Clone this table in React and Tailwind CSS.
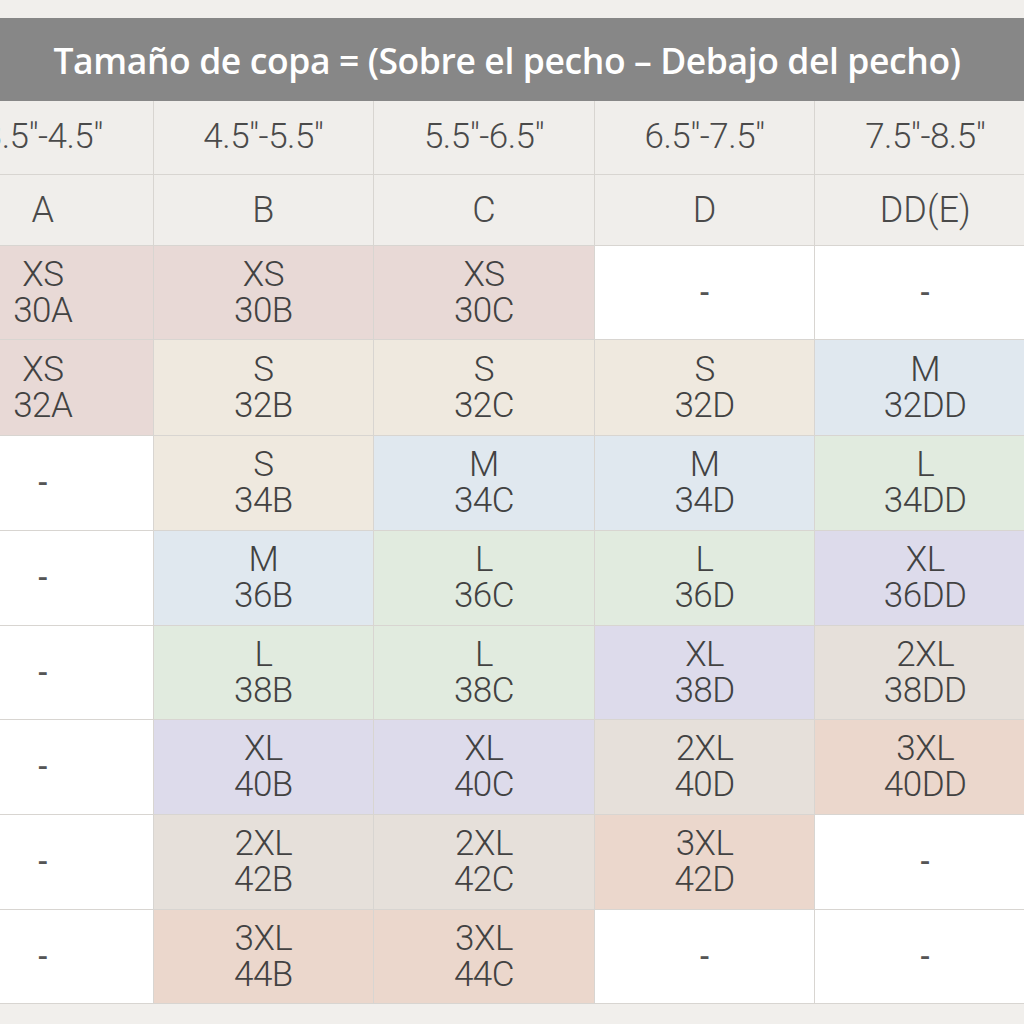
import React from 'react';

const ranges = ['3.5″-4.5″', '4.5″-5.5″', '5.5″-6.5″', '6.5″-7.5″', '7.5″-8.5″'];
const cups = ['A', 'B', 'C', 'D', 'DD(E)'];

// fondo de cada talla
const sizeBg = {
  XS: 'bg-[#e8d9d6]',
  S: 'bg-[#efe9df]',
  M: 'bg-[#e0e8ef]',
  L: 'bg-[#e1ebdf]',
  XL: 'bg-[#dddbeb]',
  '2XL': 'bg-[#e6e0da]',
  '3XL': 'bg-[#ebd7cc]',
};

const rows = [
  { h: 'h-[94px]', cells: [['XS', '30A'], ['XS', '30B'], ['XS', '30C'], null, null] },
  { h: 'h-[96px]', cells: [['XS', '32A'], ['S', '32B'], ['S', '32C'], ['S', '32D'], ['M', '32DD']] },
  { h: 'h-[95px]', cells: [null, ['S', '34B'], ['M', '34C'], ['M', '34D'], ['L', '34DD']] },
  { h: 'h-[95px]', cells: [null, ['M', '36B'], ['L', '36C'], ['L', '36D'], ['XL', '36DD']] },
  { h: 'h-[94px]', cells: [null, ['L', '38B'], ['L', '38C'], ['XL', '38D'], ['2XL', '38DD']] },
  { h: 'h-[95px]', cells: [null, ['XL', '40B'], ['XL', '40C'], ['2XL', '40D'], ['3XL', '40DD']] },
  { h: 'h-[95px]', cells: [null, ['2XL', '42B'], ['2XL', '42C'], ['3XL', '42D'], null] },
  { h: 'h-[94px]', cells: [null, ['3XL', '44B'], ['3XL', '44C'], null, null] },
];

const cellBase = 'flex items-center justify-center border-r border-b border-[#d8d5d1]';

const SizeCell = ({ cell, h }) => {
  if (!cell) {
    return (
      <div className={`${cellBase} ${h} bg-white`}>
        <span className="text-[30px] leading-none font-medium text-[#555]">-</span>
      </div>
    );
  }
  const [size, code] = cell;
  return (
    <div className={`${cellBase} ${h} ${sizeBg[size]} flex-col`}>
      <div className="text-[35px] leading-[36px] font-light text-[#424242] tracking-[-0.5px]">{size}</div>
      <div className="text-[35px] leading-[36px] font-light text-[#424242] tracking-[-0.5px]">{code}</div>
    </div>
  );
};

const App = () => {
  return (
    <div className="w-[1024px] h-[1024px] overflow-hidden bg-[#f1efec] pt-[18px] font-['Roboto','Liberation_Sans',sans-serif]">
      <div className="h-[83px] bg-[#878787] flex items-center justify-center">
        <h1 className="text-white text-[35.5px] font-semibold font-['Open_Sans','Liberation_Sans',sans-serif] tracking-[-0.4px] ml-[-10px] mt-[2px]">
          Tamaño de copa = (Sobre el pecho – Debajo del pecho)
        </h1>
      </div>
      <div className="ml-[-67px] w-[1103px] grid grid-cols-5">
        {ranges.map((r) => (
          <div key={r} className={`${cellBase} h-[74px] bg-[#f0eeeb]`}>
            <span className="text-[35px] font-light text-[#4a4a4a] tracking-[-0.5px]">{r}</span>
          </div>
        ))}
        {cups.map((c) => (
          <div key={c} className={`${cellBase} h-[71px] bg-[#f0eeeb]`}>
            <span className="text-[36px] font-light text-[#4a4a4a]">{c}</span>
          </div>
        ))}
        {rows.map((row, i) =>
          row.cells.map((cell, j) => (
            <SizeCell key={i + '-' + j} cell={cell} h={row.h} />
          ))
        )}
      </div>
    </div>
  );
};

export default App;
